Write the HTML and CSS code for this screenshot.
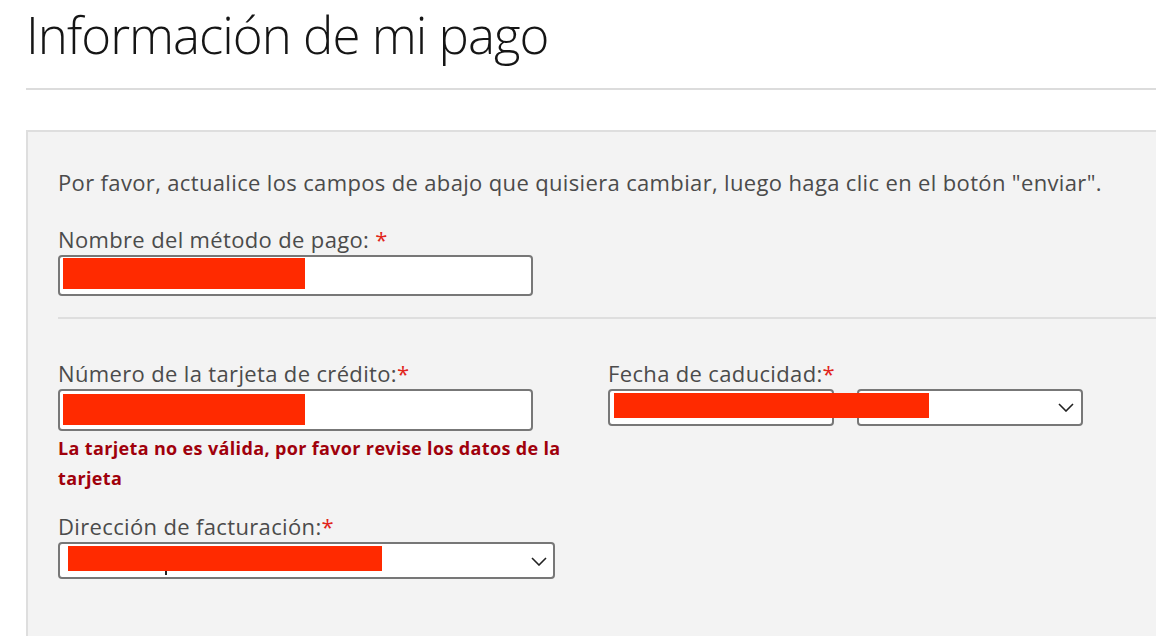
FILE: index.html
```html
<!DOCTYPE html>
<html lang="es">
<head>
<meta charset="utf-8">
<title>Información de mi pago</title>
<link rel="stylesheet" href="styles.css">
</head>
<body>
<div class="page">
  <h1 class="title">Información de mi pago</h1>
  <div class="rule"></div>
  <div class="panel">
    <p class="intro">Por favor, actualice los campos de abajo que quisiera cambiar, luego haga clic en el botón "enviar".</p>
    <div class="field field-name">
      <label class="label">Nombre del método de pago: <span class="req">*</span></label>
      <div class="input input-name"><span class="redact redact-name"></span></div>
    </div>
    <div class="divider"></div>
    <div class="row">
      <div class="col col-left">
        <div class="field">
          <label class="label">Número de la tarjeta de crédito:<span class="req">*</span></label>
          <div class="input input-card"><span class="redact redact-card"></span></div>
          <p class="error">La tarjeta no es válida, por favor revise los datos de la tarjeta</p>
        </div>
        <div class="field field-billing">
          <label class="label">Dirección de facturación:<span class="req">*</span></label>
          <div class="select select-billing">
            <span class="redact redact-billing"></span>
            <span class="stub"></span>
            <svg class="chev" width="16" height="9" viewBox="0 0 16 9"><path d="M1 1 L8 8 L15 1" fill="none" stroke="#222" stroke-width="1.6"/></svg>
          </div>
        </div>
      </div>
      <div class="col col-right">
        <div class="field">
          <label class="label">Fecha de caducidad:<span class="req">*</span></label>
          <div class="date-row">
            <div class="select select-date"></div>
            <div class="select select-date">
              <svg class="chev" width="16" height="9" viewBox="0 0 16 9"><path d="M1 1 L8 8 L15 1" fill="none" stroke="#222" stroke-width="1.6"/></svg>
            </div>
            <span class="redact redact-date"></span>
          </div>
        </div>
      </div>
    </div>
  </div>
</div>
</body>
</html>
```
FILE: styles.css
```css
html, body {
  margin: 0;
  padding: 0;
  background: #ffffff;
}
body {
  font-family: "Open Sans", "Noto Sans", sans-serif;
  color: #4b4b4b;
  overflow: hidden;
}
.page {
  padding-left: 26px;
}
.title {
  margin: 0;
  padding-top: 12px;
  height: 76px;
  font-size: 51px;
  font-weight: 300;
  line-height: 44px;
  color: #151515;
  letter-spacing: -1px;
  white-space: nowrap;
}
.rule {
  height: 2px;
  background: #dcdcdc;
}
.panel {
  margin-top: 40px;
  border-top: 2px solid #dedede;
  border-left: 2px solid #dedede;
  background: #f3f3f3;
  padding-left: 30px;
  height: 600px;
}
.intro {
  margin: 0;
  padding-top: 35px;
  font-size: 22px;
  line-height: 30px;
  letter-spacing: 0.35px;
  white-space: nowrap;
}
.field-name {
  margin-top: 27px;
}
.label {
  display: block;
  font-size: 22px;
  line-height: 30px;
  letter-spacing: 0.35px;
  color: #4b4b4b;
  white-space: nowrap;
}
.req {
  color: #e1251b;
}
.input, .select {
  position: relative;
  box-sizing: border-box;
  background: #fff;
  border: 2px solid #777;
  border-radius: 4px;
  margin-top: 1px;
}
.input-name {
  width: 475px;
  height: 41px;
}
.input-card {
  width: 475px;
  height: 42px;
}
.redact {
  position: absolute;
  background: #ff2a00;
}
.redact-name {
  left: 3px;
  top: 1px;
  width: 242px;
  height: 31px;
}
.redact-card {
  left: 3px;
  top: 3px;
  width: 242px;
  height: 31px;
}
.divider {
  margin-top: 21px;
  height: 2px;
  background: #dedede;
}
.row {
  display: flex;
  gap: 53px;
  margin-top: 39px;
}
.col-left {
  width: 497px;
}
.error {
  margin: 2px 0 0 0;
  width: 515px;
  font-size: 18px;
  font-weight: 700;
  line-height: 30px;
  color: #a0000b;
  letter-spacing: 0.35px;
}
.field-billing {
  margin-top: 18px;
}
.select {
  height: 37px;
}
.select-billing {
  width: 497px;
}
.redact-billing {
  left: 8px;
  top: 2px;
  width: 314px;
  height: 25px;
}
.stub {
  position: absolute;
  left: 105px;
  top: 27px;
  width: 2px;
  height: 4px;
  background: #222;
}
.chev {
  position: absolute;
  right: 6px;
  top: 13px;
}
.select-date .chev {
  right: 7px;
  top: 12px;
}
.date-row {
  position: relative;
  display: flex;
  gap: 23px;
}
.select-date {
  width: 226px;
}
.redact-date {
  left: 6px;
  top: 5px;
  width: 315px;
  height: 25px;
}
```
